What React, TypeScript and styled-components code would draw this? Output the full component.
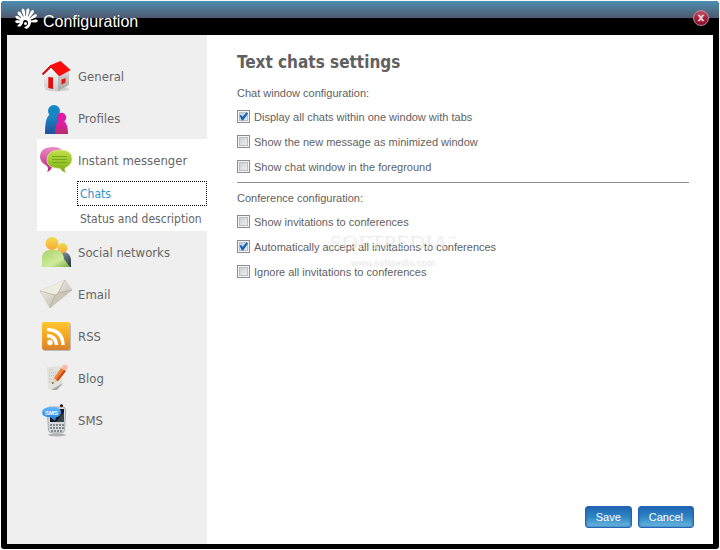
import React from 'react';
import styled, { createGlobalStyle } from 'styled-components';

const navFont = "'DejaVu Sans Condensed', 'DejaVu Sans', sans-serif";
const textFont = "'Liberation Sans', Arial, sans-serif";

const GlobalStyle = createGlobalStyle`
  * { box-sizing: border-box; }
  body { margin: 0; background: #fff; }
`;

const Window = styled.div`
  display: flex;
  flex-direction: column;
  min-height: calc(100vh - 2px);
  margin: 1px;
  padding: 0 6px 5px;
  border-radius: 4px 4px 3px 3px;
  background: #000;
  color: #5f5f5f;
  font-family: ${textFont};
`;

const TitleBar = styled.header`
  display: flex;
  align-items: center;
  justify-content: space-between;
  height: 34px;
  margin: 0 -6px;
  padding: 0 10px;
  border-radius: 4px 4px 0 0;
  background: linear-gradient(#4b8fb0 0, #50586f 17px, #000 17px);
`;

const Brand = styled.div`
  display: flex;
  align-items: center;
  gap: 4px;
`;

const WindowTitle = styled.span`
  padding-top: 8px;
  font: 16px/20px ${textFont};
  color: #fff;
`;

const CloseButton = styled.button`
  display: grid;
  place-items: center;
  width: 16px;
  height: 16px;
  padding: 0;
  border: 1px solid #b58c98;
  border-radius: 50%;
  background: linear-gradient(#c0566c, #a81f3e 50%, #8c0a28);
`;

const Body = styled.div`
  display: flex;
  flex: 1;
  background: #fff;
`;

const Sidebar = styled.nav`
  flex: 0 0 200px;
  padding: 20px 0;
  background: #efefef;
  font-family: ${navFont};
`;

const NavGroup = styled.div<{ $open?: boolean }>`
  margin-left: 30px;
  background: ${p => (p.$open ? '#fff' : 'transparent')};
`;

const NavItem = styled.a`
  display: flex;
  align-items: center;
  gap: 6px;
  height: 42px;
  padding-left: 3px;
  font-size: 13px;
  line-height: 20px;
  color: #666;
  text-decoration: none;
`;

const NavLabel = styled.span`
  padding-top: 2px;
`;

const SubItem = styled.a<{ $active?: boolean }>`
  display: flex;
  align-items: center;
  height: 25px;
  margin-left: 40px;
  padding-left: 2px;
  border: 1px dotted ${p => (p.$active ? '#000' : 'transparent')};
  font-size: 12px;
  white-space: nowrap;
  color: ${p => (p.$active ? '#2f92cc' : '#666')};
  text-decoration: none;
`;

const Main = styled.main`
  position: relative;
  display: flex;
  flex: 1;
  flex-direction: column;
  padding: 15px 19px 16px 30px;
`;

const Heading = styled.h1`
  margin: 0 0 9px;
  font: bold 17px/24px ${navFont};
  color: #606060;
`;

const Settings = styled.fieldset`
  margin: 0 5px 0 0;
  padding: 0 0 3px;
  border: 0;
  & + & {
    padding-top: 5px;
    border-top: 1px solid #8f8f8f;
  }
`;

const Legend = styled.legend`
  float: left;
  width: 100%;
  padding: 0;
  font-size: 11px;
  line-height: 21px;
`;

const Option = styled.label`
  display: flex;
  clear: both;
  align-items: center;
  gap: 4px;
  height: 25px;
  font-size: 11px;
`;

const CheckBox = styled.input`
  appearance: none;
  flex: none;
  width: 13px;
  height: 13px;
  margin: 0;
  border: 1px solid #8b8e90;
  background: linear-gradient(135deg, #c4c8cb, #f6f6f6);
  box-shadow: inset 0 0 0 1px #f4f4f4, inset 0 0 0 2px #bcbfc2;
  &:checked { background: linear-gradient(135deg, #aec9de, #f0f6fb); }
  &:checked::after {
    content: '';
    display: block;
    width: 11px;
    height: 11px;
    background: #1b62ae;
    clip-path: polygon(14% 42%, 28% 36%, 42% 52%, 78% 12%, 90% 26%, 46% 86%, 34% 84%);
  }
`;

const Actions = styled.div`
  display: flex;
  justify-content: flex-end;
  gap: 6px;
  margin-top: auto;
`;

const Button = styled.button`
  height: 22px;
  padding: 0 10px;
  border: 1px solid #2464b2;
  border-radius: 3px;
  background: linear-gradient(#1f66b5, #2f86c4 50%, #6fbbe0);
  box-shadow: inset 0 0 3px #1d62b0;
  font: 11px/14px ${textFont};
  color: #fff;
`;

const Watermark = styled.div`
  position: absolute;
  top: 195px;
  left: 119px;
  width: 132px;
  pointer-events: none;
  text-align: center;
  font-family: 'Liberation Serif', serif;
  color: rgba(255, 255, 255, 0.5);
  text-shadow: 1px 1px 1px rgba(0, 0, 0, 0.11);
`;

const Mark = styled.div`
  font-size: 22px;
  line-height: 24px;
  white-space: nowrap;
  sup { font-size: 8px; line-height: 8px; vertical-align: 9px; }
`;

const Site = styled.div`
  font: bold 9px/16px ${textFont};
`;

const Glyph = styled.svg`
  flex: none;
  display: block;
  overflow: visible;
`;

const petals = [
  [-88, 11], [-62, 12], [-38, 13], [-14, 14], [9, 14], [32, 14], [56, 13], [84, 12],
];

const Logo = () => (
  <Glyph width="28" height="24" viewBox="0 0 28 24" aria-hidden="true">
    <g fill="#fff">
      {petals.map(([angle, length]) => (
        <path
          key={angle}
          transform={`translate(15 16) rotate(${angle})`}
          d={`M-.8 -5L-1.6 ${-length + 2}Q0 ${-length - 2} 1.6 ${-length + 2}L.8 -5Z`}
        />
      ))}
      <path d="M8 16Q9 10 15 10Q21 11 20 17Q19 22 15 23L13 21Q17 20 17 17Q17 14 14 14Q12 14 12 17L10 20Q8 21 6 20L9 17Z" />
      <circle cx="14.5" cy="17.5" r="1.5" />
    </g>
  </Glyph>
);

const icons: Record<string, React.ReactNode> = {
  General: (
    <>
      <defs>
        <linearGradient id="front" x2="0" y2="1"><stop stopColor="#fff" /><stop offset="1" stopColor="#c9c9c9" /></linearGradient>
        <linearGradient id="side" x2="0" y2="1"><stop stopColor="#d8d8d8" /><stop offset="1" stopColor="#a5a5a5" /></linearGradient>
      </defs>
      <ellipse cx="17" cy="29" rx="12" ry="2.5" fill="#999" opacity=".35" />
      <path d="M4 14L11 7L18 16V31L4 27Z" fill="url(#front)" />
      <path d="M18 15L29 10V25L18 31Z" fill="url(#side)" />
      <path d="M2 13.7L10.7 5L20.5 1L30.7 10L19.3 16.2L11 7.5L3.2 15Z" fill="#fb0c0c" />
      <path d="M10.7 5L19.3 16.2L11 7.5L3.2 15L2 13.7Z" fill="#cf1313" />
      <path d="M8.3 17L13 17.5V29L8.3 28Z" fill="#e60b0b" />
      <path d="M21.5 19.5L25.5 18V22.5L21.5 24.5Z" fill="#f3110d" />
    </>
  ),
  Profiles: (
    <>
      <defs>
        <linearGradient id="man" x2="0" y2="1"><stop stopColor="#1590cb" /><stop offset="1" stopColor="#254e9b" /></linearGradient>
        <linearGradient id="woman" x2="0" y2="1"><stop stopColor="#ef18ad" /><stop offset="1" stopColor="#b1306e" /></linearGradient>
      </defs>
      <path d="M5 32Q5 13 11 12H17Q23 14 23 32Z" fill="url(#man)" />
      <circle cx="14" cy="9" r="6" fill="#1786c4" />
      <path d="M15 32Q15 21 19 19H24Q28 22 28 32Z" fill="url(#woman)" />
      <circle cx="21.5" cy="15.5" r="4.7" fill="#e01aa5" />
    </>
  ),
  'Instant messenger': (
    <>
      <defs>
        <linearGradient id="pink" x2="0" y2="1"><stop stopColor="#ea8bc3" /><stop offset="1" stopColor="#b92380" /></linearGradient>
        <linearGradient id="green" x2="0" y2="1"><stop stopColor="#c2df4a" /><stop offset="1" stopColor="#76ad12" /></linearGradient>
      </defs>
      <path d="M13 3C4 3 0 7 0 13Q0 18 7 22Q9 25 7 28Q12 26 12 22Q24 22 24 12Q24 3 13 3Z" fill="url(#pink)" />
      <path d="M20 6C11 6 7 10 7 16C7 22 12 24 20 24.500Q22 28 26 29Q24 26 25 24Q32 21 32 15C32 9 28 6 20 6Z" fill="url(#green)" stroke="#e0eeb4" strokeWidth=".6" />
      <path d="M12 12.500H27M12 15.500H27M12 18.500H27" stroke="#70a91a" />
    </>
  ),
  'Social networks': (
    <>
      <defs>
        <linearGradient id="gold" x2="0" y2="1"><stop stopColor="#e9df4e" /><stop offset="1" stopColor="#ffa733" /></linearGradient>
        <linearGradient id="lime" x2="1" y2="1"><stop stopColor="#a5d268" /><stop offset=".6" stopColor="#d0eb9c" /><stop offset="1" stopColor="#74b03c" /></linearGradient>
        <linearGradient id="steel" x2="1" y2="1"><stop stopColor="#9babb5" /><stop offset="1" stopColor="#25343e" /></linearGradient>
      </defs>
      <path d="M16 31V18Q18 16 24 16Q30 17 31 23V31Z" fill="url(#steel)" />
      <circle cx="22.500" cy="12" r="5" fill="url(#gold)" />
      <path d="M2 31V21Q3 15 9 14H17Q23 15 24 23L30 31Z" fill="url(#lime)" />
      <circle cx="12" cy="7.500" r="6.500" fill="url(#gold)" />
    </>
  ),
  Email: (
    <>
      <defs><linearGradient id="paper" x2=".7" y2="1"><stop stopColor="#faf9f4" /><stop offset="1" stopColor="#bdb9a9" /></linearGradient></defs>
      <path d="M0 13L25 2L32 12L10 30Z" fill="url(#paper)" stroke="#cbc7ba" strokeWidth=".6" />
      <path d="M10 30L15 16L32 12Z" fill="#cbc6b7" />
      <path d="M0 13L15 17Q17 17 18 15L25 2Z" fill="#eeebe1" />
      <path d="M0 13L15 17Q17 17 18 15L25 2M10 30L15 17M18 15L32 12" fill="none" stroke="#a9a494" strokeWidth=".6" />
    </>
  ),
  RSS: (
    <>
      <defs><linearGradient id="rss" x2="0" y2="1"><stop stopColor="#ffc632" /><stop offset=".55" stopColor="#f4a320" /><stop offset="1" stopColor="#d6822c" /></linearGradient></defs>
      <rect x="3" y="3" width="28" height="28" rx="2" fill="#bbb" />
      <rect x="2" y="2" width="28" height="28" rx="2" fill="url(#rss)" />
      <circle cx="10" cy="22.500" r="2.700" fill="#fff" />
      <path d="M7 15.500Q16 16 16.500 25M7 9.500Q22.500 10 23 25" fill="none" stroke="#fff" strokeWidth="3.500" />
    </>
  ),
  Blog: (
    <>
      <path d="M7 5L21 4L23 24L15 28L8 27Z" fill="#e2e2dc" />
      <path d="M9 8L13 7.500M9 11L18 10M9 14L17 13M9 17L14 17M9 20L13 20" stroke="#b4b4af" strokeWidth=".8" strokeDasharray="1 1" />
      <path d="M11 28L23 21L17 28Z" fill="#a4a9a3" />
      <path d="M12 22L14 16L18 19Z" fill="#e8cfaa" />
      <path d="M12 22L12.500 20L14 21Z" fill="#333" />
      <path d="M14 16L21 6L26 9L18 19Z" fill="#f28038" />
      <path d="M16 18L24 8L26 9L18 19Z" fill="#c94b12" />
      <path d="M21 6L23 3Q27 2 28 5L26 9Z" fill="#ffb9ac" />
    </>
  ),
  SMS: (
    <>
      <defs><linearGradient id="bubble" x2="0" y2="1"><stop stopColor="#62b8ff" /><stop offset="1" stopColor="#1f7bdb" /></linearGradient></defs>
      <ellipse cx="17" cy="31" rx="9" ry="1.500" fill="#b0b0b0" />
      <path d="M20 4V1Q21.500 -.5 23 1V4Z" fill="#111" />
      <path d="M9 3H24Q26 4 25.500 10L24.500 26Q24 29 21 29H12Q9 29 8.500 26L7.500 10Z" fill="#d7dadd" stroke="#8c9195" strokeWidth=".7" />
      <path d="M10 5H24V18H10Z" fill="#11161a" />
      <path d="M16 18L24 8V18Z" fill="#39434b" />
      <path d="M10 21H24M10 24H24M11 27H23" stroke="#80878d" strokeWidth="2" strokeDasharray="2 1" />
      <path d="M12 3Q2 3 2 8.500Q2 13 11 13.500L15 17L16 13.500Q21 12 21 8.500Q21 3 12 3Z" fill="url(#bubble)" />
      <text x="5" y="11" fontSize="6" fontFamily="Liberation Sans" fontWeight="bold" fill="#fff">SMS</text>
    </>
  ),
};

const NavIcon = ({ name }: { name: string }) => (
  <Glyph width="32" height="32" viewBox="0 0 32 32" aria-hidden="true">{icons[name]}</Glyph>
);

const sections = [
  { name: 'General' },
  { name: 'Profiles' },
  { name: 'Instant messenger', children: ['Chats', 'Status and description'] },
  { name: 'Social networks' },
  { name: 'Email' },
  { name: 'RSS' },
  { name: 'Blog' },
  { name: 'SMS' },
];

const groups: { title: string; options: [string, boolean][] }[] = [
  {
    title: 'Chat window configuration:',
    options: [
      ['Display all chats within one window with tabs', true],
      ['Show the new message as minimized window', false],
      ['Show chat window in the foreground', false],
    ],
  },
  {
    title: 'Conference configuration:',
    options: [
      ['Show invitations to conferences', false],
      ['Automatically accept all invitations to conferences', true],
      ['Ignore all invitations to conferences', false],
    ],
  },
];

export default function App() {
  return (
    <>
      <GlobalStyle />
      <Window>
        <TitleBar>
          <Brand>
            <Logo />
            <WindowTitle>Configuration</WindowTitle>
          </Brand>
          <CloseButton aria-label="Close">
            <Glyph width="8" height="8" viewBox="0 0 8 8" aria-hidden="true">
              <path d="M2 1.500L6 6.500M6 1.500L2 6.500" stroke="#f2dfe4" strokeWidth="1.600" />
              <path d="M.8 1.300H3.300M4.700 1.300H7.200M.8 6.700H3.300M4.700 6.700H7.200" stroke="#f2dfe4" />
            </Glyph>
          </CloseButton>
        </TitleBar>
        <Body>
          <Sidebar>
            {sections.map(s => (
              <NavGroup key={s.name} $open={!!s.children}>
                <NavItem href="#">
                  <NavIcon name={s.name} />
                  <NavLabel>{s.name}</NavLabel>
                </NavItem>
                {s.children?.map((c, i) => (
                  <SubItem key={c} href="#" $active={i === 0}>{c}</SubItem>
                ))}
              </NavGroup>
            ))}
          </Sidebar>
          <Main>
            <Heading>Text chats settings</Heading>
            {groups.map(g => (
              <Settings key={g.title}>
                <Legend>{g.title}</Legend>
                {g.options.map(([label, on]) => (
                  <Option key={label}>
                    <CheckBox type="checkbox" defaultChecked={on} />
                    <span>{label}</span>
                  </Option>
                ))}
              </Settings>
            ))}
            <Watermark>
              <Mark>SOFTPEDIA<sup>™</sup></Mark>
              <Site>www.softpedia.com</Site>
            </Watermark>
            <Actions>
              <Button>Save</Button>
              <Button>Cancel</Button>
            </Actions>
          </Main>
        </Body>
      </Window>
    </>
  );
}
